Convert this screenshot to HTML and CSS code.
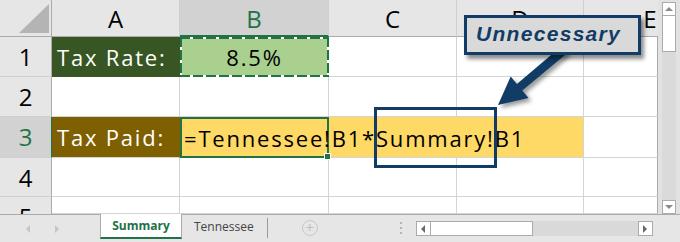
FILE: index.html
```html
<!DOCTYPE html>
<html lang="en">
<head>
  <meta charset="UTF-8" />
  <meta name="viewport" content="width=device-width, initial-scale=1.0" />
  <title>Tax sheet</title>
  <link rel="stylesheet" href="styles.css">
</head>
<body>
  <div class="app">
    <div class="main">
      <div class="sheet">
        <div class="corner">
          <svg width="51" height="36" viewBox="0 0 51 36"><polygon points="19,33 49,33 49,4" fill="#b4b4b4"/></svg>
        </div>
        <div class="colhead">A</div>
        <div class="colhead active">B</div>
        <div class="colhead">C</div>
        <div class="colhead">D</div>
        <div class="colhead last">E</div>

        <div class="rowhead">1</div>
        <div class="cell label rate-label">Tax Rate:</div>
        <div class="cell copied">8.5%</div>
        <div class="cell"></div>
        <div class="cell"></div>
        <div class="cell last"></div>

        <div class="rowhead">2</div>
        <div class="cell"></div>
        <div class="cell"></div>
        <div class="cell"></div>
        <div class="cell"></div>
        <div class="cell last"></div>

        <div class="rowhead active">3</div>
        <div class="cell label paid-label">Tax Paid:</div>
        <div class="cell editing">
          <span class="formula">=Tennessee!B1*Summary!B1</span><span class="caret"></span>
          <span class="handle"></span>
        </div>
        <div class="cell fill joined"></div>
        <div class="cell fill"></div>
        <div class="cell last"></div>

        <div class="rowhead">4</div>
        <div class="cell"></div>
        <div class="cell"></div>
        <div class="cell"></div>
        <div class="cell"></div>
        <div class="cell last"></div>

        <div class="rowhead cut">5</div>
        <div class="cell"></div>
        <div class="cell"></div>
        <div class="cell"></div>
        <div class="cell"></div>
        <div class="cell last"></div>
      </div>

      <div class="vscroll">
        <div class="sbtn"><span class="tri up"></span></div>
        <div class="vthumb"></div>
        <div class="vtrack"></div>
        <div class="sbtn"><span class="tri down"></span></div>
      </div>
    </div>

    <div class="tabbar">
      <div class="tabnav">
        <span class="tri left pale"></span>
        <span class="tri right pale"></span>
      </div>
      <div class="tab current">Summary</div>
      <div class="tab">Tennessee</div>
      <div class="tabsep"></div>
      <div class="addsheet">+</div>
      <div class="splitter"><i></i><i></i><i></i></div>
      <div class="hscroll">
        <div class="hbtn"><span class="tri left"></span></div>
        <div class="hthumb"></div>
        <div class="htrack"></div>
        <div class="hbtn"><span class="tri right"></span></div>
      </div>
    </div>

    <!-- annotation drawn over the sheet -->
    <svg class="arrow" width="680" height="242" viewBox="0 0 680 242">
      <polygon points="568,52.5 522.3,90.5 528.5,98 498,105 510.7,76.4 516.9,83.9 562.3,45.5" fill="#103c66"/>
    </svg>
    <div class="callout">Unnecessary</div>
    <div class="ref-box"></div>
  </div>
</body>
</html>
```

FILE: styles.css
```css
body {
  margin: 0;
  font-family: "Open Sans", sans-serif;
  background-color: #fff;
  color: #000;
}
.app {
  position: relative;
  width: 680px;
  height: 242px;
  overflow: hidden;
}
.main {
  display: flex;
  height: 214px;
}
.sheet {
  display: grid;
  grid-template-columns: 52px 128px 149px 128px 127px 74px;
  grid-template-rows: 37px 40px 40px 41px 39px 17px;
  width: 658px;
  background-color: #fff;
}
.sheet > div {
  box-sizing: border-box;
}
.corner {
  background-color: #e6e6e6;
  border-right: 1px solid #ababab;
  border-bottom: 1px solid #ababab;
}
.corner svg {
  display: block;
}
.colhead {
  background-color: #e6e6e6;
  border-right: 1px solid #cfcfcf;
  border-bottom: 1px solid #ababab;
  text-align: center;
  line-height: 37px;
  font-size: 24px;
  color: #000;
}
.colhead.active {
  background-color: #d2d2d2;
  color: #217346;
  border-bottom: 2px solid #217346;
}
.colhead.last {
  border-right: none;
  padding-left: 58px;
}
.rowhead {
  background-color: #e6e6e6;
  border-right: 1px solid #ababab;
  border-bottom: 1px solid #cfcfcf;
  text-align: center;
  line-height: 40px;
  font-size: 24px;
  color: #000;
}
.rowhead.active {
  background-color: #d2d2d2;
  color: #217346;
  border-right-color: #217346;
}
.rowhead.cut {
  overflow: hidden;
  border-bottom: none;
}
.cell {
  border-right: 1px solid #d4d4d4;
  border-bottom: 1px solid #d4d4d4;
  display: flex;
  align-items: center;
  font-size: 22px;
  letter-spacing: 1.8px;
  white-space: nowrap;
}
.cell.last {
  border-right-color: #ababab;
}
.label {
  color: #fff;
  padding-left: 5px;
}
.rate-label {
  background-color: #375623;
  border-color: #375623;
}
.paid-label {
  background-color: #7f6000;
  border-right-color: #7f6000;
}
.copied {
  justify-content: center;
  border: none;
  background:
    repeating-linear-gradient(90deg, #217346 0 10px, #fff 10px 13px) top left / 100% 2px no-repeat,
    repeating-linear-gradient(90deg, #217346 0 10px, #fff 10px 13px) bottom left / 100% 2px no-repeat,
    repeating-linear-gradient(180deg, #217346 0 10px, #fff 10px 13px) top left / 2px 100% no-repeat,
    repeating-linear-gradient(180deg, #217346 0 10px, #fff 10px 13px) top right / 2px 100% no-repeat,
    #a9d08e;
}
.editing {
  position: relative;
  z-index: 2;
  background-color: #ffd966;
  border: 2px solid #217346;
  padding-left: 2px;
}
.caret {
  display: inline-block;
  width: 1px;
  height: 39px;
  background-color: #2a47a8;
}
.handle {
  position: absolute;
  right: -4px;
  bottom: -4px;
  width: 5px;
  height: 5px;
  background-color: #217346;
  border: 1px solid #fff;
}
.fill {
  background-color: #ffd966;
}
.fill.joined {
  border-right-color: #ffd966;
}

.vscroll {
  width: 22px;
  background-color: #e2e2e2;
  display: flex;
  flex-direction: column;
  align-items: center;
  padding: 2px 0 0;
  box-sizing: border-box;
}
.sbtn {
  width: 14px;
  height: 14px;
  box-sizing: border-box;
  background-color: #fff;
  border: 1px solid #ababab;
  display: flex;
  align-items: center;
  justify-content: center;
}
.vthumb {
  width: 14px;
  height: 36px;
  box-sizing: border-box;
  background-color: #fff;
  border: 1px solid #ababab;
  border-top: none;
}
.vtrack {
  flex: 1;
  width: 14px;
  background-color: #dadada;
}
.tri {
  width: 0;
  height: 0;
  border: 4px solid transparent;
}
.tri.up {
  border-top: none;
  border-bottom: 4px solid #8a8a8a;
}
.tri.down {
  border-bottom: none;
  border-top: 4px solid #8a8a8a;
}
.tri.left {
  border-left: none;
  border-right: 4px solid #6a6a6a;
}
.tri.right {
  border-right: none;
  border-left: 4px solid #6a6a6a;
}
.tri.left.pale {
  border-right-color: #c4c4c4;
}
.tri.right.pale {
  border-left-color: #c4c4c4;
}

.tabbar {
  height: 28px;
  box-sizing: border-box;
  border-top: 1px solid #ababab;
  background-color: #e6e6e6;
  display: flex;
  align-items: flex-start;
  font-size: 12px;
}
.tabnav {
  width: 100px;
  height: 27px;
  display: flex;
  align-items: center;
  gap: 25px;
  padding-left: 26px;
  box-sizing: border-box;
}
.tab {
  height: 24px;
  line-height: 24px;
  padding: 0 13px 0 12px;
  color: #444;
}
.tab.current {
  width: 82px;
  box-sizing: border-box;
  margin-top: -1px;
  height: 25px;
  padding: 0;
  text-align: center;
  background-color: #fff;
  border-left: 1px solid #ababab;
  border-right: 1px solid #ababab;
  border-bottom: 2px solid #217346;
  color: #217346;
  font-weight: bold;
}
.tabsep {
  width: 1px;
  height: 20px;
  margin-top: 3px;
  background-color: #9b9b9b;
}
.addsheet {
  width: 14px;
  height: 14px;
  margin: 5px 0 0 34px;
  border: 1px solid #c8c8c8;
  border-radius: 50%;
  color: #c0c0c0;
  font-size: 15px;
  line-height: 13px;
  text-align: center;
}
.splitter {
  display: flex;
  flex-direction: column;
  gap: 3px;
  margin: 7px 0 0 82px;
}
.splitter i {
  width: 2px;
  height: 2px;
  background-color: #b5b5b5;
}
.hscroll {
  display: flex;
  margin: 6px 0 0 14px;
  height: 15px;
}
.hbtn {
  width: 15px;
  height: 15px;
  box-sizing: border-box;
  background-color: #fff;
  border: 1px solid #ababab;
  display: flex;
  align-items: center;
  justify-content: center;
}
.hthumb {
  width: 102px;
  box-sizing: border-box;
  background-color: #fff;
  border: 1px solid #ababab;
  border-left: none;
}
.htrack {
  width: 105px;
  background-color: #d9d9d9;
}

.arrow {
  position: absolute;
  left: 0;
  top: 0;
  pointer-events: none;
  filter: drop-shadow(3px 3px 2px rgba(0, 0, 0, 0.4));
}
.callout {
  position: absolute;
  left: 464px;
  top: 15px;
  width: 177px;
  height: 40px;
  box-sizing: border-box;
  border: 3px solid #103c66;
  background-color: #d9d9d9;
  box-shadow: 3px 4px 4px rgba(0, 0, 0, 0.45);
  padding: 0 0 3px 9px;
  display: flex;
  align-items: center;
  font-family: "Liberation Sans", sans-serif;
  font-weight: bold;
  font-style: italic;
  font-size: 21px;
  letter-spacing: 1.3px;
  color: #103c66;
}
.ref-box {
  position: absolute;
  left: 374px;
  top: 107px;
  width: 123px;
  height: 61px;
  box-sizing: border-box;
  border: 3px solid #103c66;
  z-index: 3;
}
```
